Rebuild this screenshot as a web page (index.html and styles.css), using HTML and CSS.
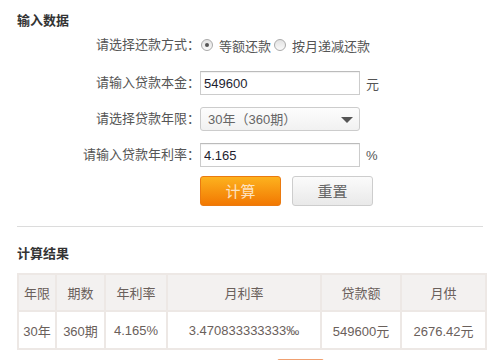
FILE: index.html
```html
<!DOCTYPE html>
<html lang="zh-CN">
<head>
<meta charset="utf-8">
<title>房贷计算器</title>
<link rel="stylesheet" href="styles.css">
</head>
<body>
<div class="page">
  <h2 class="section-title first">输入数据</h2>
  <form class="calc-form">
    <div class="row row-radio">
      <label class="lbl">请选择还款方式：</label>
      <div class="field">
        <span class="radio checked"></span><span class="radio-text">等额还款</span>
        <span class="radio"></span><span class="radio-text">按月递减还款</span>
      </div>
    </div>
    <div class="row row-principal">
      <label class="lbl">请输入贷款本金：</label>
      <div class="field">
        <input class="text-input" type="text" value="549600"><span class="unit">元</span>
      </div>
    </div>
    <div class="row row-term">
      <label class="lbl">请选择贷款年限：</label>
      <div class="field">
        <div class="select-wrap">
          <select class="select"><option>30年（360期）</option></select>
          <svg class="select-arrow" width="12" height="6" viewBox="0 0 12 6"><path d="M0 0H12L6 6Z" fill="#555"/></svg>
        </div>
      </div>
    </div>
    <div class="row row-rate">
      <label class="lbl">请输入贷款年利率：</label>
      <div class="field">
        <input class="text-input" type="text" value="4.165"><span class="unit">%</span>
      </div>
    </div>
    <div class="row row-buttons">
      <span class="lbl"></span>
      <div class="field">
        <button type="button" class="btn btn-primary">计算</button>
        <button type="button" class="btn btn-default">重置</button>
      </div>
    </div>
  </form>
  <div class="divider"></div>
  <h2 class="section-title second">计算结果</h2>
  <table class="result">
    <colgroup>
      <col style="width:38px"><col style="width:49px"><col style="width:62px"><col style="width:154px"><col style="width:80px"><col style="width:85px">
    </colgroup>
    <thead>
      <tr><th>年限</th><th>期数</th><th>年利率</th><th>月利率</th><th>贷款额</th><th>月供</th></tr>
    </thead>
    <tbody>
      <tr><td>30年</td><td>360期</td><td>4.165%</td><td>3.470833333333‰</td><td>549600元</td><td>2676.42元</td></tr>
    </tbody>
  </table>
  <div class="more-btn"></div>
</div>
</body>
</html>
```

FILE: styles.css
```css
html, body {
  margin: 0;
  padding: 0;
  background: #fff;
}
body {
  font-family: "Liberation Sans", "Noto Sans CJK SC", sans-serif;
  font-size: 13px;
  color: #555;
}
.page {
  padding: 13px 0 0 17px;
  width: 468px;
}
.section-title {
  margin: 0;
  font-size: 13px;
  line-height: 16px;
  font-weight: bold;
  color: #333;
}
.calc-form {
  margin-left: -17px;
}
.row {
  display: flex;
  align-items: center;
  height: 24px;
}
.row-radio { margin-top: 4px; }
.row-principal { margin-top: 14px; }
.row-term { margin-top: 12px; }
.row-rate { margin-top: 12px; }
.row-buttons { margin-top: 9px; height: 30px; }
.lbl {
  width: 200px;
  flex: none;
  text-align: right;
  color: #555;
  line-height: 24px;
}
.field {
  display: flex;
  align-items: center;
}
.radio {
  width: 10px;
  height: 10px;
  border: 1px solid #aaa;
  border-radius: 50%;
  background: linear-gradient(#e2e2e2, #fafafa);
  margin: 0 6px 0 1px;
  display: flex;
  align-items: center;
  justify-content: center;
}
.radio.checked::after {
  content: "";
  width: 4px;
  height: 4px;
  border-radius: 50%;
  background: #555;
}
.radio-text {
  margin-right: 2px;
  color: #555;
}
.text-input {
  box-sizing: border-box;
  width: 160px;
  height: 24px;
  margin: 0;
  padding: 0 3px;
  border: 1px solid #ccc;
  border-top-color: #bbb;
  box-shadow: inset 0 1px 1px rgba(0,0,0,0.06);
  font-family: "Liberation Sans", sans-serif;
  font-size: 13px;
  color: #1e1e30;
  outline: none;
}
.unit {
  margin-left: 6px;
  color: #555;
}
.select-wrap {
  position: relative;
  width: 160px;
  height: 24px;
}
.select {
  appearance: none;
  -webkit-appearance: none;
  box-sizing: border-box;
  width: 160px;
  height: 24px;
  margin: 0;
  padding: 0 0 0 7px;
  border: 1px solid #ccc;
  border-radius: 3px;
  background: linear-gradient(#fdfdfd, #f1f1f1);
  font-family: "Liberation Sans", "Noto Sans CJK SC", sans-serif;
  font-size: 13px;
  color: #666;
  outline: none;
}
.select-arrow {
  position: absolute;
  right: 7px;
  top: 10px;
  pointer-events: none;
}
.btn {
  box-sizing: border-box;
  width: 81px;
  height: 30px;
  margin: 0;
  border-radius: 3px;
  font-family: "Noto Sans CJK SC", sans-serif;
  font-size: 15px;
  line-height: 28px;
  padding: 0;
  cursor: pointer;
}
.btn-primary {
  border: 1px solid #ea7a10;
  background: linear-gradient(#fdb21e, #f27802);
  color: #fde2c0;
}
.btn-default {
  margin-left: 11px;
  border: 1px solid #cdcdcd;
  background: linear-gradient(#fbfbfb, #e9e9e9);
  color: #666;
}
.divider {
  margin-top: 20px;
  height: 1px;
  width: 466px;
  background: #dcdcdc;
}
.section-title.second {
  margin-top: 19px;
}
.result {
  margin-top: 11px;
  width: 468px;
  table-layout: fixed;
  border-collapse: collapse;
  border: 2px solid #ede8e5;
}
.result th, .result td {
  border: 2px solid #ede8e5;
  text-align: center;
  font-weight: normal;
  font-size: 13px;
  color: #6a605b;
  padding: 0;
  white-space: nowrap;
}
.result th {
  height: 35px;
  background: #f3f1f0;
}
.result td {
  height: 36px;
  background: #fff;
}
.more-btn {
  margin: 9px 0 0 260px;
  width: 47px;
  height: 28px;
  border: 1px solid #f0a070;
  border-radius: 2px;
  box-sizing: border-box;
}
```
